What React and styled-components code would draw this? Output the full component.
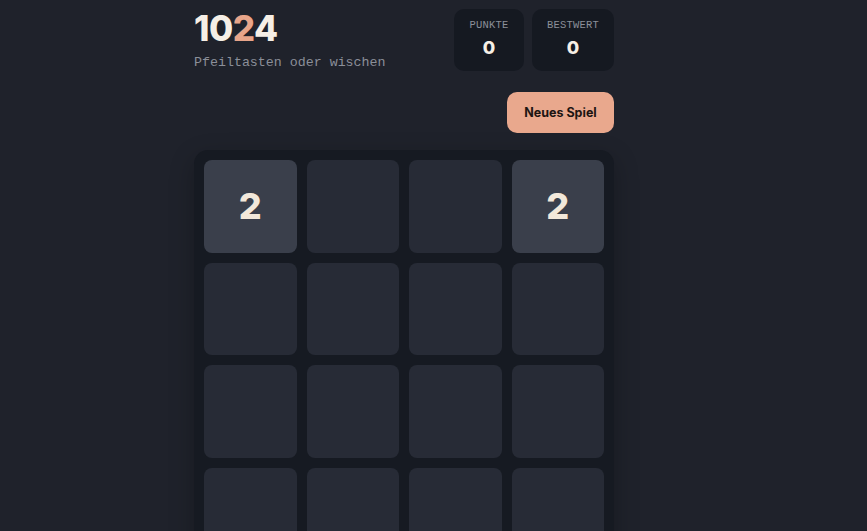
import { useState } from 'react';
import styled, { createGlobalStyle } from 'styled-components';

const GlobalStyle = createGlobalStyle`
  html, body {
    margin: 0;
    padding: 0;
    background: #1f222b;
  }
  * {
    box-sizing: border-box;
  }
`;

const initialBoard = [
  [2, 0, 0, 2],
  [0, 0, 0, 0],
  [0, 0, 0, 0],
  [0, 0, 0, 0],
];

const App = () => {
  const [board] = useState(initialBoard);
  const [score] = useState(0);
  const [best] = useState(0);

  return (
    <>
      <GlobalStyle />
      <Page>
        <Game>
          <Header>
            <TitleBlock>
              <Title>
                10<Accent>2</Accent>4
              </Title>
              <Subtitle>Pfeiltasten oder wischen</Subtitle>
            </TitleBlock>
            <Scores>
              <ScoreBox>
                <ScoreLabel>PUNKTE</ScoreLabel>
                <ScoreValue>{score}</ScoreValue>
              </ScoreBox>
              <ScoreBox>
                <ScoreLabel>BESTWERT</ScoreLabel>
                <ScoreValue>{best}</ScoreValue>
              </ScoreBox>
            </Scores>
          </Header>
          <Actions>
            <NewGameButton>Neues Spiel</NewGameButton>
          </Actions>
          <Board>
            {board.flat().map((value, index) => (
              <Tile key={index} filled={value > 0}>
                {value > 0 ? value : ''}
              </Tile>
            ))}
          </Board>
        </Game>
      </Page>
    </>
  );
};

export default App;

const Page = styled.div`
  min-height: 100vh;
  padding: 9px 0 0 194px;
  background: #1f222b;
`;

const Game = styled.div`
  width: 420px;
  display: flex;
  flex-direction: column;
`;

const Header = styled.div`
  display: flex;
  justify-content: space-between;
  align-items: flex-start;
`;

const TitleBlock = styled.div`
  display: flex;
  flex-direction: column;
`;

const Title = styled.h1`
  margin: 0;
  font-family: Inter, 'Noto Sans', sans-serif;
  font-weight: 800;
  font-size: 35px;
  line-height: 38px;
  letter-spacing: -0.5px;
  color: #f6efe6;
`;

const Accent = styled.span`
  color: #e8a58a;
`;

const Subtitle = styled.div`
  margin-top: 8px;
  font-family: 'Liberation Mono', 'DejaVu Sans Mono', monospace;
  font-size: 13.3px;
  color: #8b8f99;
`;

const Scores = styled.div`
  display: flex;
  gap: 8px;
`;

const ScoreBox = styled.div`
  display: flex;
  flex-direction: column;
  align-items: center;
  min-width: 70px;
  height: 62px;
  padding: 10px 15px 0;
  border-radius: 10px;
  background: #151921;
`;

const ScoreLabel = styled.div`
  font-family: 'Liberation Mono', 'DejaVu Sans Mono', monospace;
  font-size: 10.5px;
  letter-spacing: 0.2px;
  color: #8b8f99;
`;

const ScoreValue = styled.div`
  margin-top: 5px;
  font-family: Inter, 'Noto Sans', sans-serif;
  font-weight: 800;
  font-size: 18px;
  line-height: 24px;
  color: #f6efe6;
`;

const Actions = styled.div`
  display: flex;
  justify-content: flex-end;
  margin-top: 21px;
`;

const NewGameButton = styled.button`
  width: 107px;
  height: 41px;
  border: none;
  border-radius: 10px;
  background: #e9a88d;
  color: #1d1512;
  font-family: Inter, 'Noto Sans', sans-serif;
  font-weight: 700;
  font-size: 12.5px;
  cursor: pointer;
`;

const Board = styled.div`
  margin-top: 17px;
  display: grid;
  grid-template-columns: repeat(4, 1fr);
  gap: 10px;
  padding: 10px;
  border-radius: 14px;
  background: #161a22;
  box-shadow: 0 8px 24px rgba(0, 0, 0, 0.25);
`;

const Tile = styled.div`
  height: 92.5px;
  display: flex;
  align-items: center;
  justify-content: center;
  border-radius: 8px;
  background: ${({ filled }) => (filled ? '#3a3f4b' : '#272b36')};
  color: #f2e8da;
  font-family: Inter, 'Noto Sans', sans-serif;
  font-weight: 800;
  font-size: 36px;
`;
